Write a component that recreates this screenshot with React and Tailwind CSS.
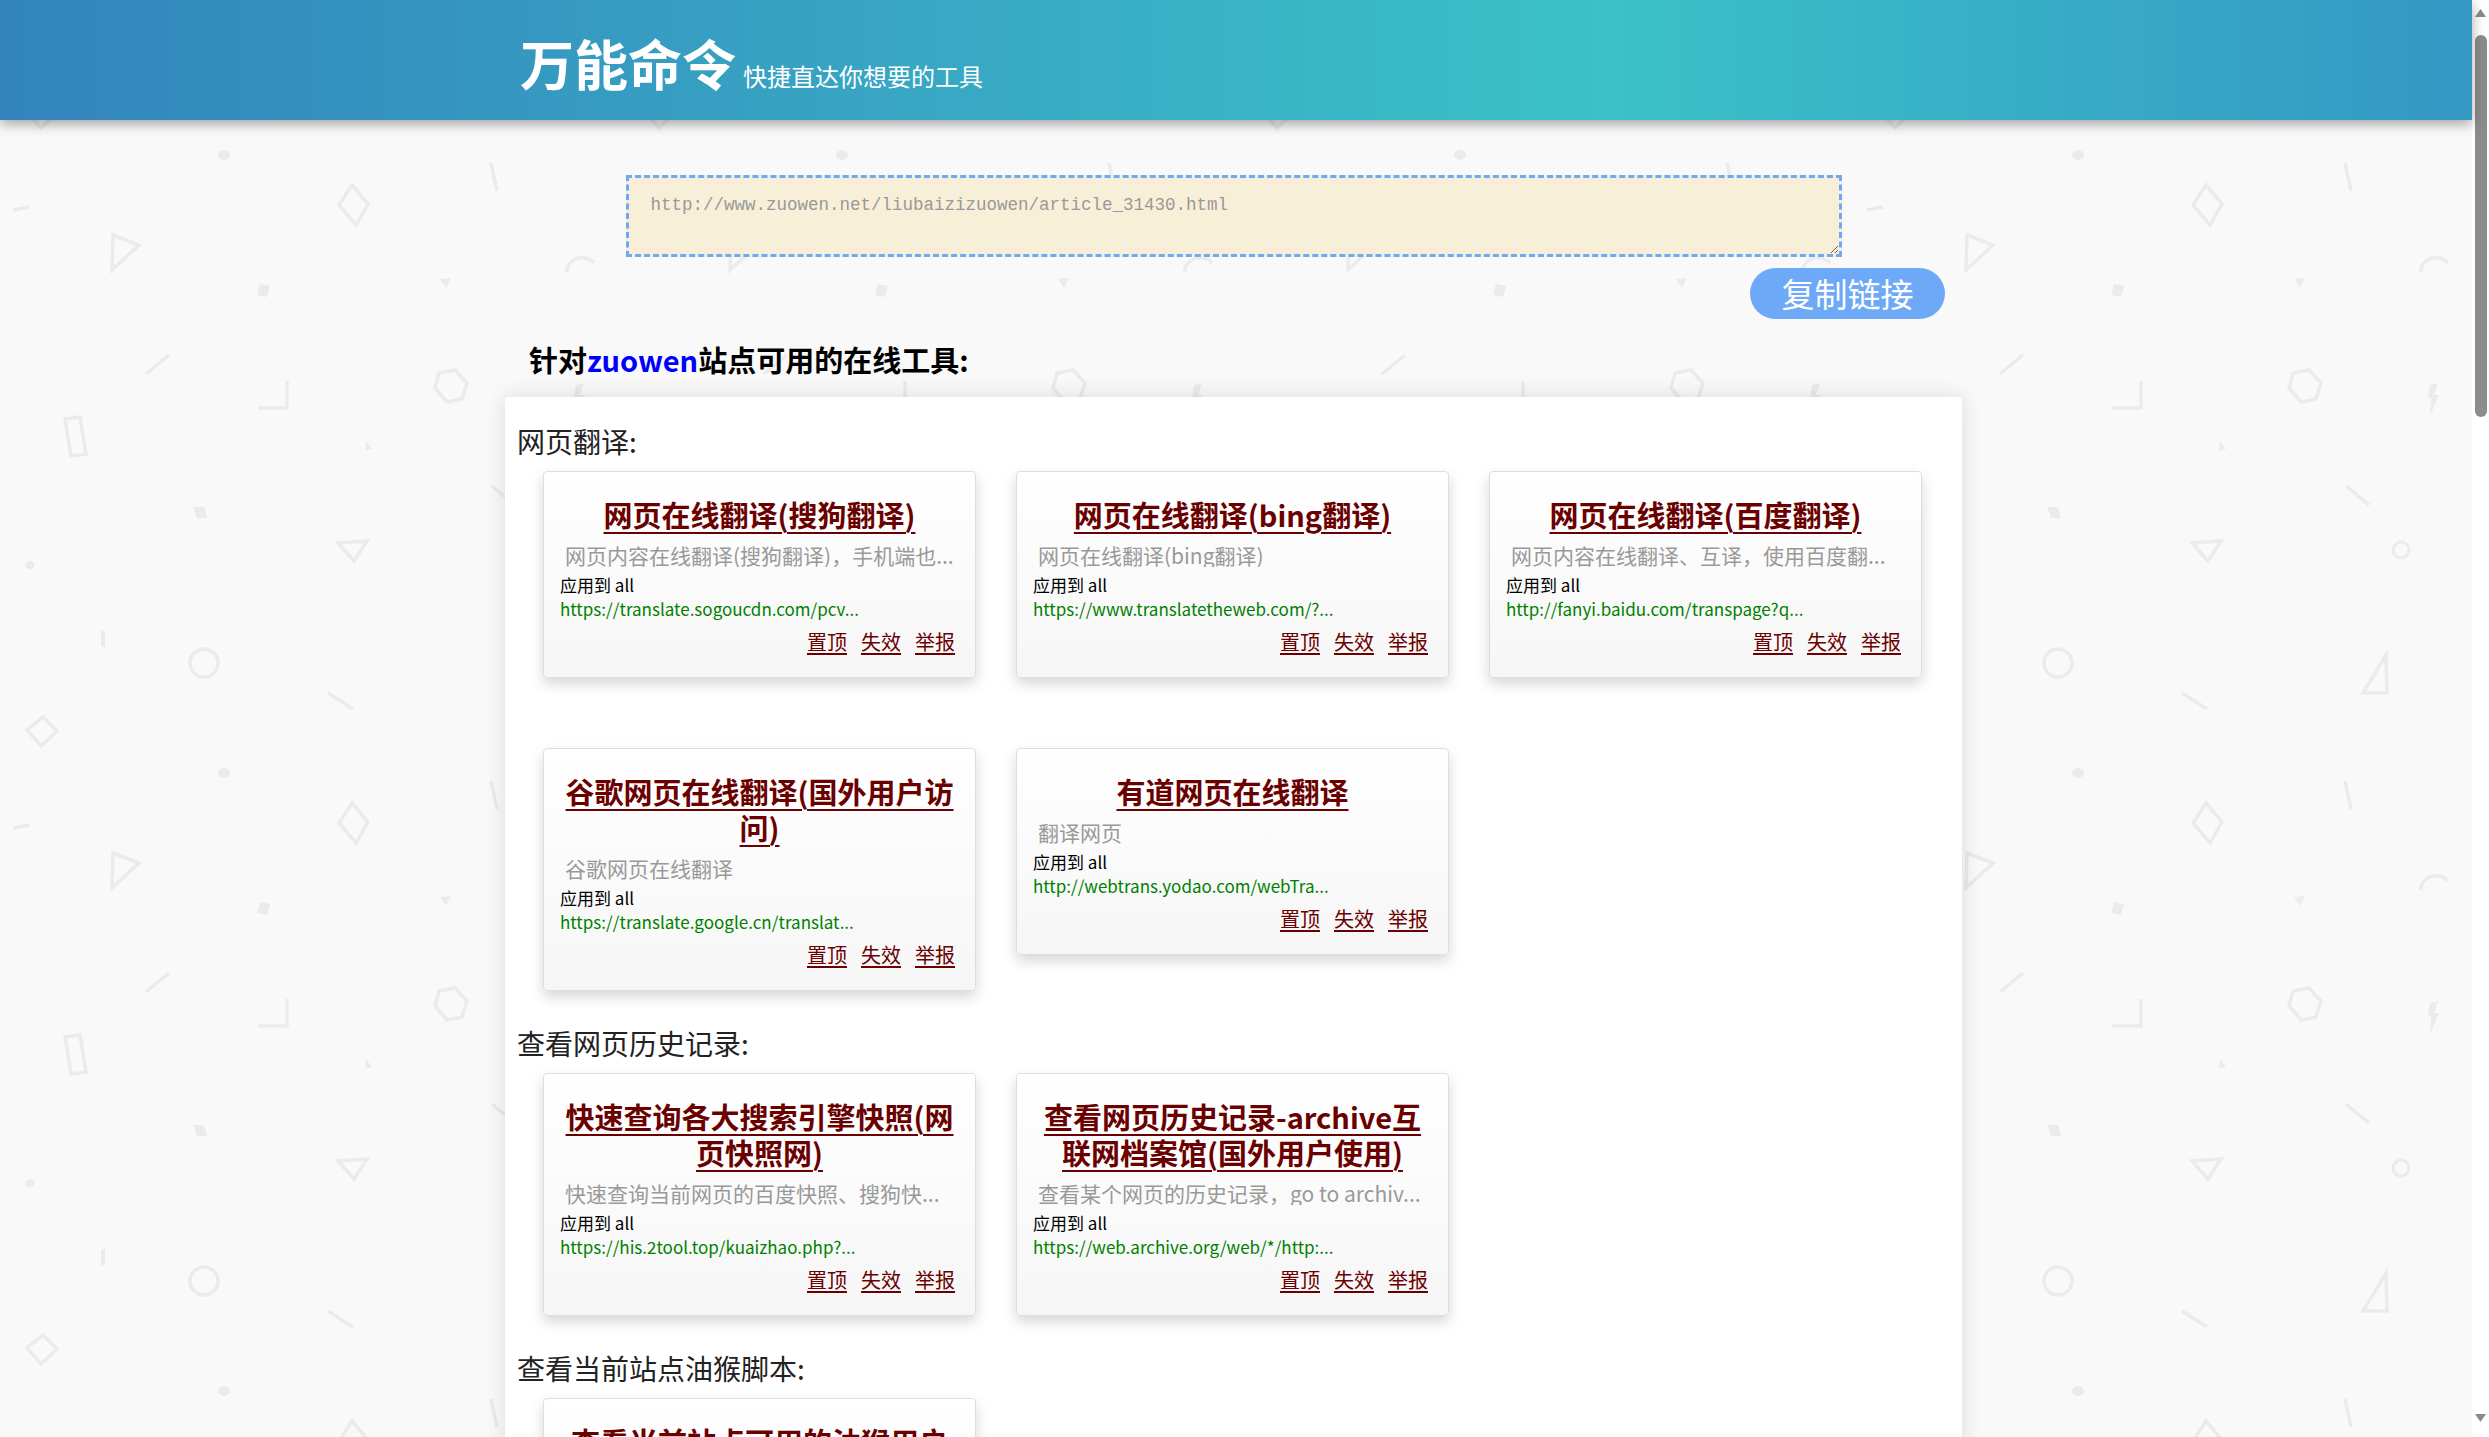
import React from 'react';

const sections = [
  {
    name: '网页翻译:',
    tools: [
      { title: ['网页在线翻译(搜狗翻译)'], desc: '网页内容在线翻译(搜狗翻译)，手机端也...', url: 'https://translate.sogoucdn.com/pcv...' },
      { title: ['网页在线翻译(bing翻译)'], desc: '网页在线翻译(bing翻译)', url: 'https://www.translatetheweb.com/?...' },
      { title: ['网页在线翻译(百度翻译)'], desc: '网页内容在线翻译、互译，使用百度翻...', url: 'http://fanyi.baidu.com/transpage?q...' },
      { title: ['谷歌网页在线翻译(国外用户访', '问)'], desc: '谷歌网页在线翻译', url: 'https://translate.google.cn/translat...' },
      { title: ['有道网页在线翻译'], desc: '翻译网页', url: 'http://webtrans.yodao.com/webTra...' },
    ],
  },
  {
    name: '查看网页历史记录:',
    tools: [
      { title: ['快速查询各大搜索引擎快照(网', '页快照网)'], desc: '快速查询当前网页的百度快照、搜狗快...', url: 'https://his.2tool.top/kuaizhao.php?...' },
      { title: ['查看网页历史记录-archive互', '联网档案馆(国外用户使用)'], desc: '查看某个网页的历史记录，go to archiv...', url: 'https://web.archive.org/web/*/http:...' },
    ],
  },
  {
    name: '查看当前站点油猴脚本:',
    tools: [
      { title: ['查看当前站点可用的油猴用户', '脚本'], desc: '在Greasy Fork上查找当前站点可用的...', url: 'https://greasyfork.org/zh-CN/scripts...' },
    ],
  },
];

function BgPattern() {
  // faint confetti tile, repeats every 618px
  return (
    <svg className="pointer-events-none absolute inset-0 h-full w-full" aria-hidden="true">
      <defs>
        <pattern id="confetti" width="618" height="618" patternUnits="userSpaceOnUse">
          <g fill="none" stroke="#ebebeb" strokeWidth="3.5">
            <line x1="13" y1="210" x2="29" y2="207" />
            <polygon points="113,235 139,245 112,270" />
            <polygon points="352,185 368,204 356,225 339,205" />
            <line x1="491" y1="163" x2="497" y2="191" />
            <line x1="146" y1="374" x2="169" y2="355" />
            <polyline points="258,408 287,408 287,381" />
            <polygon points="439,373 455,370 467,383 462,399 447,402 435,388" />
            <polygon points="65,419 80,417 86,454 71,456" />
            <polygon points="338,543 367,541 354,561" />
            <line x1="492" y1="486" x2="515" y2="505" />
            <line x1="103" y1="13" x2="103" y2="29" strokeWidth="4" />
            <circle cx="204" cy="45" r="14" />
            <line x1="328" y1="75" x2="353" y2="91" />
            <polygon points="43,99 57,113 41,128 27,112" />
            <path d="M567 272 A15 13 0 0 1 594 263" />
            <circle cx="547" cy="550" r="8" strokeWidth="3" />
            <polygon points="509,75 533,75 532,37" />
          </g>
          <g fill="#ebebeb">
            <ellipse cx="224" cy="155" rx="6" ry="5" />
            <polygon points="260,284 270,286 267,297 257,295" />
            <polygon points="440,279 451,278 446,288" />
            <polygon points="366,441 372,449 365,451" />
            <polygon points="193,507 204,507 207,518 197,518" />
            <ellipse cx="30" cy="565" rx="4.5" ry="4" />
            <polygon points="576,385 584,383 580,395 585,395 576,416 577,398 574,398" />
          </g>
        </pattern>
      </defs>
      <rect width="100%" height="100%" fill="url(#confetti)" />
    </svg>
  );
}

function Scrollbar() {
  return (
    <aside className="sticky top-0 flex h-screen w-[17px] shrink-0 flex-col items-center bg-white">
      <div className="flex h-[17px] items-end justify-center pt-[4px]">
        <svg width="11" height="8" viewBox="0 0 11 8"><polygon points="0,8 5.5,0 11,8" fill="#8a8a8a" /></svg>
      </div>
      <div className="mt-[18px] h-[382px] w-[12px] rounded-full bg-[#8c8c8c]" />
      <div className="flex-1" />
      <div className="flex h-[24px] items-start justify-center pt-[1px]">
        <svg width="11" height="8" viewBox="0 0 11 8"><polygon points="0,0 11,0 5.5,8" fill="#8a8a8a" /></svg>
      </div>
    </aside>
  );
}

function ToolCard({ tool }) {
  return (
    <div className="rounded-[4px] border border-[#dedede] bg-[linear-gradient(180deg,#ffffff,#f6f6f6)] px-4 pt-6 pb-[22px] shadow-[0_6px_14px_rgba(0,0,0,0.16)]">
      <a href="#" className="block text-center text-[29px] font-bold leading-[36px] text-[#6b0000]">
        {tool.title.map(line => (
          <span key={line} className="block whitespace-nowrap underline decoration-2 underline-offset-[5px]">{line}</span>
        ))}
      </a>
      <div className="mt-[11px] overflow-hidden whitespace-nowrap pl-[5px] text-[21px] leading-[24px] text-[#999]">{tool.desc}</div>
      <div className="mt-[6px] text-[17px] leading-[24px] text-black">应用到 all</div>
      <div className="whitespace-nowrap text-[17px] leading-[24px] text-[#008000]">{tool.url}</div>
      <div className="mt-2 flex justify-end gap-[14px] pr-1 text-[20px] leading-[26px] text-[#6b0000]">
        <a href="#" className="underline underline-offset-[3px]">置顶</a>
        <a href="#" className="underline underline-offset-[3px]">失效</a>
        <a href="#" className="underline underline-offset-[3px]">举报</a>
      </div>
    </div>
  );
}

export default function App() {
  return (
    <div className="flex min-h-screen bg-white font-['Noto_Sans_CJK_SC',sans-serif]">
      <div className="relative min-w-0 flex-1 bg-[#f9f9f9]">
        <BgPattern />

        <header className="relative z-20 h-[120px] bg-[linear-gradient(90deg,#3384bd_0%,#3bc1c8_65%,#3498c4_100%)] shadow-[0_4px_12px_rgba(0,0,0,0.35)]">
          <div className="ml-[504px] flex w-[1457px] items-baseline pl-4 pt-[36px] text-white">
            <h1 className="text-[54px] font-bold leading-none">万能命令</h1>
            <span className="ml-[7px] text-[24px] leading-none">快捷直达你想要的工具</span>
          </div>
        </header>

        <main className="relative z-10 ml-[505px] w-[1457px] pt-[55px]">
          <textarea
            readOnly
            value="http://www.zuowen.net/liubaizizuowen/article_31430.html"
            className="mx-auto block h-[82px] w-[1216px] border-[3px] border-dashed border-[#6ea8f7] bg-[#f8efd8] px-[22px] pt-[17px] font-['Liberation_Mono',monospace] text-[17.5px] leading-[20px] text-[#999] outline-none"
          />
          <div className="mt-[11px] flex justify-end pr-[17px]">
            <button className="h-[51px] w-[195px] rounded-full bg-[#6ea9f7] text-[33px] leading-none text-white">复制链接</button>
          </div>

          <h2 className="mt-[20px] pl-6 text-[29px] font-bold leading-[40px] text-black">
            针对<span className="text-[#0000ff]">zuowen</span>站点可用的在线工具:
          </h2>

          <div className="mt-[18px] rounded-t-[4px] bg-white pl-3 pt-[26px] pb-10 shadow-[0_0_22px_rgba(0,0,0,0.12)]">
            {sections.map((s, i) => (
              <section key={s.name} className={i > 0 ? 'mt-[34px]' : ''}>
                <h3 className="text-[28px] leading-[36px] text-[#222]">{s.name}</h3>
                <div className="mt-3 ml-[26px] grid grid-cols-[433px_433px_433px] items-start gap-x-10 gap-y-[70px]">
                  {s.tools.map(t => <ToolCard key={t.url} tool={t} />)}
                </div>
              </section>
            ))}
          </div>
        </main>
      </div>
      <Scrollbar />
    </div>
  );
}
